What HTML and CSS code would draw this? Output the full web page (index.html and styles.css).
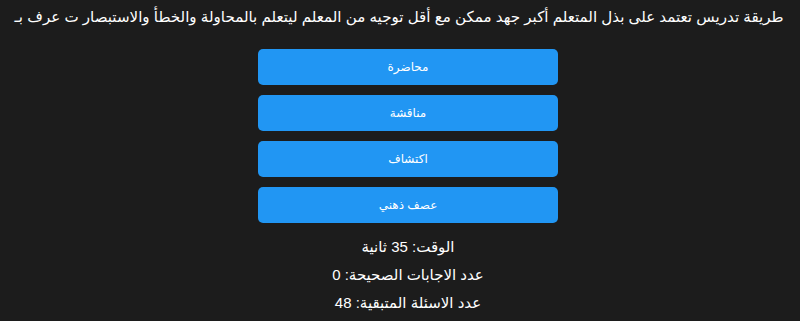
FILE: index.html
```html
<!DOCTYPE html>
<html lang="ar" dir="rtl">
<head>
<meta charset="utf-8">
<link rel="stylesheet" href="styles.css">
</head>
<body>
<div class="quiz">
  <h2 class="question">طريقة تدريس تعتمد على بذل المتعلم أكبر جهد ممكن مع أقل توجيه من المعلم ليتعلم بالمحاولة والخطأ والاستبصار ت عرف بـ</h2>
  <div class="content">
    <div class="answers">
      <button class="answer">محاضرة</button>
      <button class="answer">مناقشة</button>
      <button class="answer">اكتشاف</button>
      <button class="answer">عصف ذهني</button>
    </div>
    <div class="stats">
      <p class="stat">الوقت: 35 ثانية</p>
      <p class="stat">عدد الاجابات الصحيحة: 0</p>
      <p class="stat">عدد الاسئلة المتبقية: 48</p>
    </div>
  </div>
</div>
</body>
</html>
```

FILE: styles.css
```css
html, body {
  margin: 0;
  padding: 0;
  background: #1c1c1c;
  color: #ffffff;
  font-family: "Liberation Sans", Arial, "DejaVu Sans", sans-serif;
  overflow: hidden;
}
.quiz {
  display: flex;
  flex-direction: column;
}
.question {
  margin: 8px 0 0;
  font-size: 15.1px;
  font-weight: normal;
  line-height: 18px;
  text-align: center;
  white-space: nowrap;
  padding-right: 2px;
}
.content {
  display: flex;
  flex-direction: column;
  align-items: center;
  padding-left: 16px;
}
.answers {
  margin-top: 23px;
  display: flex;
  flex-direction: column;
  gap: 10px;
}
.answer {
  width: 300px;
  height: 36px;
  border: none;
  border-radius: 5px;
  background: #2196f3;
  color: #ffffff;
  font-family: inherit;
  font-size: 12px;
  padding: 0;
}
.stats {
  margin-top: 10px;
  text-align: center;
}
.stat {
  margin: 0;
  font-size: 15px;
  line-height: 28px;
}
```
